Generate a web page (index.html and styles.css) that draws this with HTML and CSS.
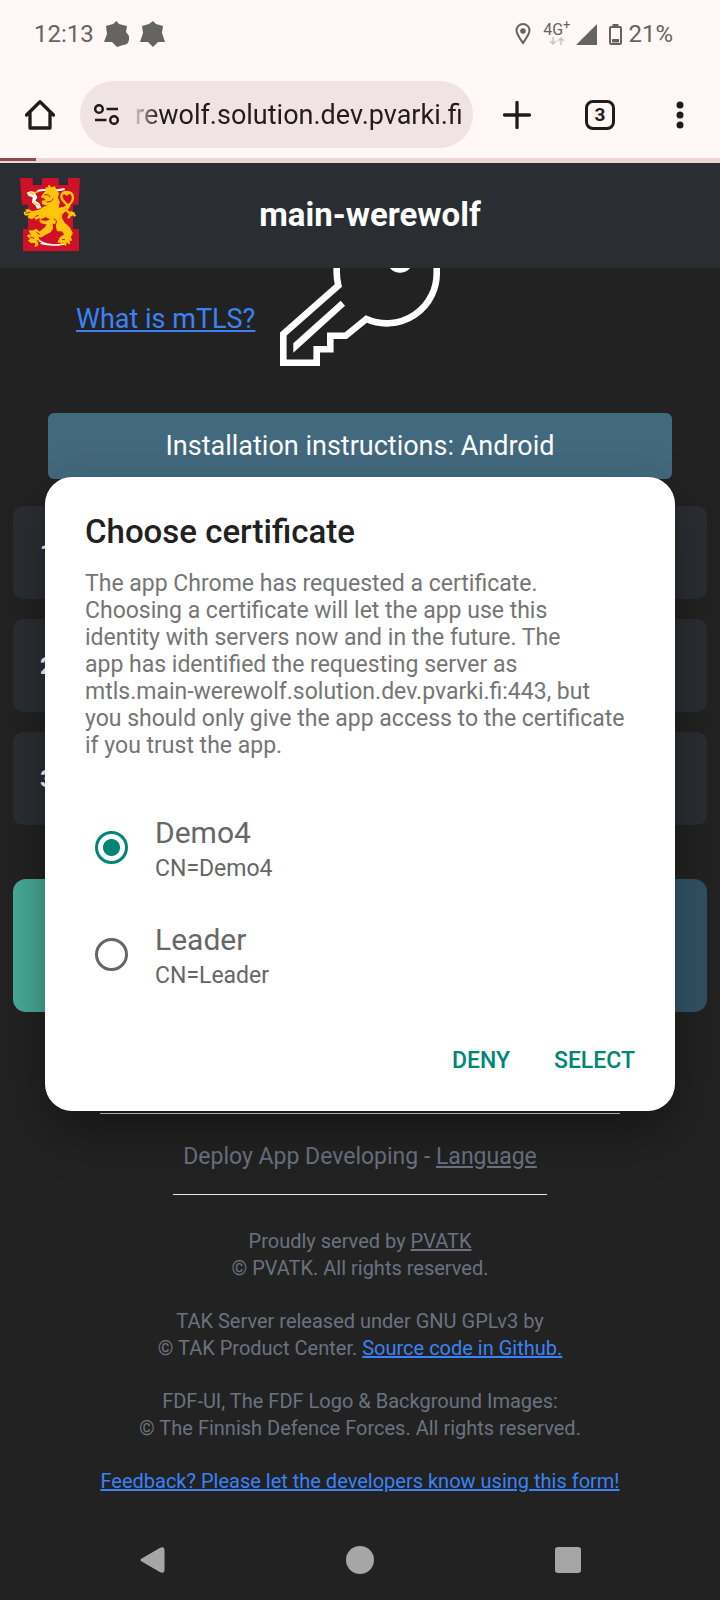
FILE: index.html
```html
<!DOCTYPE html>
<html lang="en">
<head>
<meta charset="utf-8">
<meta name="viewport" content="width=device-width, initial-scale=1">
<title>main-werewolf</title>
<link rel="stylesheet" href="styles.css">
</head>
<body>
<div class="screen">
  <div class="status-bar">
    <div class="status-left">
      <span>12:13</span>
      <svg class="badge-icon" width="26" height="26" viewBox="0 0 26 26" aria-hidden="true"><path fill="#666461" d="M12.500 0 15 3 23 5 22 11 25 15Q26 24 19 24L13 26 8 21H0L3 13 2 5 9 3Z"/></svg>
      <svg class="badge-icon" width="26" height="26" viewBox="0 0 26 26" aria-hidden="true"><path fill="#666461" d="M13 0 16 3 23 5 22 12 25 21H18L13 26 8 21H0L3 12 2 5 9 3Z"/></svg>
    </div>
    <div class="status-right">
      <svg width="16" height="22" viewBox="0 0 16 22" aria-hidden="true"><path d="M8 20C4 14 1.500 11 1.500 7.500a6.500 6.500 0 0 1 13 0C14.500 11 12 14 8 20Z" fill="none" stroke="#666461" stroke-width="2"/><circle cx="8" cy="8" r="2.800" fill="#666461"/></svg>
      <span class="network"><span class="network-name">4G<sup>+</sup></span>
        <svg width="16" height="8" viewBox="0 0 16 8" aria-hidden="true"><path d="M4 0V7M1 4 4 7 7 4M12 8V1M9 4 12 1 15 4" fill="none" stroke="#c9c4c2" stroke-width="1.500"/></svg>
      </span>
      <svg width="21" height="21" viewBox="0 0 21 21" aria-hidden="true"><path d="M21 0V21H0Z" fill="#666461"/></svg>
      <svg class="battery" width="13" height="21" viewBox="0 0 13 21" aria-hidden="true"><path d="M3.500 1H9.500" stroke="#666461" stroke-width="2"/><rect x="1" y="3" width="11" height="17" rx="1" fill="none" stroke="#666461" stroke-width="2"/><path d="M3 15H10V18.500H3Z" fill="#666461"/></svg>
      <span>21%</span>
    </div>
  </div>

  <div class="toolbar">
    <button class="tool" aria-label="Home"><svg width="30" height="30" viewBox="0 0 30 30"><path d="M1.500 15 15 1.800 28.500 15M5 12V28H25V12" fill="none" stroke="#231a1b" stroke-width="3.300" stroke-linejoin="round" stroke-linecap="round"/></svg></button>
    <div class="omnibox">
      <svg class="tune" width="25" height="21" viewBox="0 0 25 21" aria-hidden="true"><g fill="none" stroke="#231a1b" stroke-width="2.500"><circle cx="5" cy="5" r="3.800"/><path d="M12.500 5H24M1 16H12.500"/><circle cx="20" cy="16" r="3.800"/></g></svg>
      <input class="url" type="text" aria-label="Address" value="rewolf.solution.dev.pvarki.fi">
    </div>
    <button class="tool" aria-label="New tab"><svg width="28" height="28" viewBox="0 0 28 28"><path d="M14 1.500V26.500M1.500 14H26.500" stroke="#231a1b" stroke-width="3.300" stroke-linecap="round"/></svg></button>
    <button class="tool tabs" aria-label="3 open tabs">3</button>
    <button class="tool menu" aria-label="Menu"><svg width="8" height="28" viewBox="0 0 8 28"><g fill="#231a1b"><circle cx="4" cy="4" r="3.500"/><circle cx="4" cy="14" r="3.500"/><circle cx="4" cy="24" r="3.500"/></g></svg></button>
  </div>
  <div class="progress"><div class="progress-fill"></div></div>

  <header class="site-header">
    <svg class="logo" width="60" height="73" viewBox="60 54 180 219" role="img" aria-label="Lion crest">
      <path fill="#d01027" d="M60 54H98V75H126V54H176V75H204V54H240L235 134H219V207H237V273H69V207H84V134H66Z"/>
      <g fill="none" stroke="#fff" stroke-width="6"><path d="M112 93Q130 88 150 92M160 90Q176 92 194 87" /><path d="M116 241Q140 257 180 255M122 250Q150 259 196 252" stroke-width="4"/></g>
      <path fill="#fff" d="M80 98 92 93 104 96 112 112 106 122 118 130 124 143 112 147 106 136 96 128 98 112 86 108Z"/>
      <path fill="#ffc60b" stroke="#ffc60b" stroke-width="3" stroke-linejoin="round" d="M147 75 153 84 164 80 169 90 176 100 172 112 178 126 175 138 179 150 178 160 186 158Q180 174 192 188L208 202 217 220 211 231 215 241 207 240 209 252 199 245 197 257 189 247 182 254 183 245 174 247 181 232 194 224 187 213 172 212 168 192 156 189 158 205 151 216 138 222 124 231 112 228 119 242 109 237 114 255 105 260 108 247 94 248 85 242 92 237 84 229 94 225 88 212 99 213 108 208 119 216 135 203 142 193 123 188 119 182 139 184 154 178 136 170 121 178 119 173 107 178 106 171 94 176 84 172 90 165 75 165 72 157 83 155 77 150 86 149 96 155 116 151 132 141 146 137 127 131 127 123 140 122 133 114 124 111 131 101 138 93 138 83 146 84Z"/>
      <path fill="none" stroke="#ffc60b" stroke-width="7" d="M181 158Q198 155 207 138Q184 122 184 109Q185 96 202 96Q220 98 219 115Q216 132 194 142Q184 151 186 158M200 149Q208 166 224 159M211 159 205 175M215 157 226 169"/>
      <path fill="#ffc60b" d="M190 101 201 107 211 100 206 94H196ZM176 145 188 140 198 151 188 163 176 158ZM205 157 214 153 222 164 209 171Z"/>
      <path fill="none" stroke="#d01027" stroke-width="3" d="M133 104 145 105 151 112M140 126 152 125 160 116M161 176 170 183 166 195M77 160 91 157M106 170 116 165M91 231 103 235M186 238 195 239M110 217 120 224"/>
      <path fill="none" stroke="#ffc60b" stroke-width="4" d="M91 94 101 105M86 100 95 98M100 127 115 136M101 99 116 94M89 224 82 229M91 246 112 238"/>
    </svg>
    <h1>main-werewolf</h1>
  </header>

  <main>
    <section class="intro">
      <a class="link" href="#mtls">What is mTLS?</a>
      <svg class="key" width="160" height="98" viewBox="0 0 160 98" aria-hidden="true">
        <path fill="none" stroke="#fff" stroke-width="6.600" d="M56.700 -4V4Q56.700 11 58.300 17.500L3.300 66V94.700H36.700V81.300H50.300V67.700H65.700L86.300 51A50 50 0 0 0 156.700 4.300V-4"/>
        <path fill="#fff" d="M60.700 32.700 65 37.700 13.300 84.700V75.300Z"/><circle cx="120" cy="-8.300" r="13" fill="#fff"/>
      </svg>
    </section>
    <button class="instructions">Installation instructions: Android</button>
    <ol class="steps"><li>1.</li><li>2.</li><li>3.</li></ol>
    <div class="cta"></div>
    <footer>
      <hr class="rule-wide">
      <p class="deploy">Deploy App Developing - <a href="#language">Language</a></p>
      <hr class="rule-short">
      <p>Proudly served by <a href="#pvatk">PVATK</a><br>© PVATK. All rights reserved.</p>
      <p>TAK Server released under GNU GPLv3 by<br>© TAK Product Center. <a class="link" href="#source">Source code in Github.</a></p>
      <p>FDF-UI, The FDF Logo &amp; Background Images:<br>© The Finnish Defence Forces. All rights reserved.</p>
      <p><a class="link" href="#feedback">Feedback? Please let the developers know using this form!</a></p>
    </footer>
  </main>

  <nav class="system-nav" aria-label="System">
    <button aria-label="Back"><svg width="26" height="28" viewBox="0 0 26 28"><path d="M22 3 3 14 22 25Q24 26 24 24V4Q24 2 22 3Z" fill="#a6a6a6" stroke="#a6a6a6" stroke-width="3" stroke-linejoin="round"/></svg></button>
    <button aria-label="Home screen"><svg width="28" height="28" viewBox="0 0 28 28"><circle cx="14" cy="14" r="14" fill="#a6a6a6"/></svg></button>
    <button aria-label="Recent apps"><svg width="26" height="26" viewBox="0 0 26 26"><rect width="26" height="26" rx="3" fill="#a6a6a6"/></svg></button>
  </nav>

  <div class="overlay">
    <form class="dialog" role="dialog" aria-labelledby="dialog-title">
      <h2 id="dialog-title">Choose certificate</h2>
      <p class="message">The app Chrome has requested a certificate.<br>Choosing a certificate will let the app use this<br>identity with servers now and in the future. The<br>app has identified the requesting server as<br>mtls.main-werewolf.solution.dev.pvarki.fi:443, but<br>you should only give the app access to the certificate<br>if you trust the app.</p>
      <div class="options">
        <label class="option"><input type="radio" name="cert" checked><span class="option-text"><span class="name">Demo4</span><span class="cn">CN=Demo4</span></span></label>
        <label class="option"><input type="radio" name="cert"><span class="option-text"><span class="name">Leader</span><span class="cn">CN=Leader</span></span></label>
      </div>
      <div class="actions"><button type="button">DENY</button><button type="button">SELECT</button></div>
    </form>
  </div>
</div>
</body>
</html>
```
FILE: styles.css
```css
* { box-sizing: border-box; }
body { margin: 0; background: #222; font-family: Roboto, "Liberation Sans", sans-serif; }
button { border: 0; padding: 0; background: none; font: inherit; color: inherit; cursor: pointer; }
svg { display: block; flex: none; }
h1, h2, p, ol, hr { margin: 0; padding: 0; }
.screen { position: relative; min-height: 100vh; display: flex; flex-direction: column; }

.status-bar { height: 68px; padding: 0 47px 0 34px; display: flex; align-items: center; justify-content: space-between; background: #fff8f6; color: #666461; font-size: 24px; }
.status-left { display: flex; align-items: center; gap: 10px; }
.status-right { display: flex; align-items: center; gap: 6px; }
.network { display: flex; flex-direction: column; align-items: center; margin-left: 6px; }
.network-name { font-size: 16px; line-height: 14px; }
.network-name sup { font-size: 13px; line-height: 0; }
.battery { margin-left: 6px; }

.toolbar { height: 90px; padding: 3px 16px 0; display: flex; align-items: center; background: #fff8f6; color: #231a1b; }
.tool { width: 48px; height: 48px; display: grid; place-items: center; flex: none; }
.omnibox { flex: 1; min-width: 0; height: 67px; margin: 0 20px 0 16px; padding: 0 10px 0 14px; display: flex; align-items: center; gap: 16px; border-radius: 34px; background: #f0e3e3; }
.url { flex: 1; min-width: 0; border: 0; padding: 0; outline: 0; font: 400 27px Roboto, sans-serif; color: transparent; background: linear-gradient(90deg, #cfc3c3, #231a1b 24px); -webkit-background-clip: text; background-clip: text; }
.tool.tabs { width: 30px; height: 30px; margin: 0 41px 0 44px; border: 3px solid #231a1b; border-radius: 8px; font-size: 19px; font-weight: 700; line-height: 24px; }
.progress { height: 5px; background: #ecd6d6; }
.progress-fill { width: 5%; height: 3px; background: #94494d; }

.site-header { height: 105px; padding: 0 60px 3px 20px; display: flex; align-items: center; background: #2a2e32; color: #fff; }
.site-header h1 { flex: 1; text-align: center; font-size: 33px; font-weight: 700; }

main { flex: 1; padding: 0 13px; }
.link { color: #3b82f6; }
.intro { display: flex; align-items: center; gap: 25px; padding-left: 63px; font-size: 27px; }
.intro .link { padding-top: 4px; }
.instructions { display: block; width: calc(100% - 70px); height: 66px; margin: 47px auto 27px; border-radius: 6px; background: #43697e; color: #fff; font-size: 27px; }
.steps { display: grid; gap: 20px; list-style: none; color: #fff; font-size: 24px; font-weight: 700; }
.steps li { height: 93px; padding-left: 27px; display: flex; align-items: center; border-radius: 10px; background: #2a2e32; }
.cta { height: 133px; margin-top: 54px; border-radius: 13px; background: linear-gradient(90deg, #47ad98, #315265); }

footer { padding-top: 101px; display: flex; flex-direction: column; align-items: center; gap: 26px; text-align: center; color: #6b7280; font-size: 20px; line-height: 27px; }
footer a:not(.link) { color: inherit; }
footer hr { height: 1px; border: 0; background: #e5e7eb; }
.rule-wide { width: 75%; }
.rule-short { width: 54%; margin-bottom: 7px; }
.deploy { padding-top: 5px; font-size: 23px; line-height: 23px; }

.system-nav { height: 80px; display: flex; justify-content: center; gap: 160px; }
.system-nav button { width: 48px; display: grid; place-items: center; }

.overlay { position: absolute; inset: 67px 0 80px; padding: 0 45px; display: flex; align-items: center; }
.dialog { width: 100%; padding: 37px 40px 26px; border-radius: 27px; background: #fff; box-shadow: 0 20px 50px rgba(0, 0, 0, .35); }
.dialog h2 { color: #212121; font-size: 33px; font-weight: 500; line-height: 36px; }
.message { margin-top: 20px; color: #757575; font-size: 23px; line-height: 27px; white-space: nowrap; }
.options { margin-top: 35px; display: grid; }
.option { height: 107px; padding-left: 10px; display: flex; align-items: center; gap: 27px; color: #666; }
.option input { appearance: none; flex: none; width: 33px; height: 33px; margin: 0; border: 3px solid #666; border-radius: 50%; }
.option input:checked { border-color: #008577; background: radial-gradient(circle, #008577 8px, transparent 9px); }
.option-text { padding-top: 5px; display: flex; flex-direction: column; }
.name { font-size: 30px; line-height: 38px; }
.cn { font-size: 23px; line-height: 34px; }
.actions { margin-top: 29px; display: flex; justify-content: flex-end; gap: 44px; color: #008577; font-size: 23px; font-weight: 500; }
.actions button { height: 48px; }
```
